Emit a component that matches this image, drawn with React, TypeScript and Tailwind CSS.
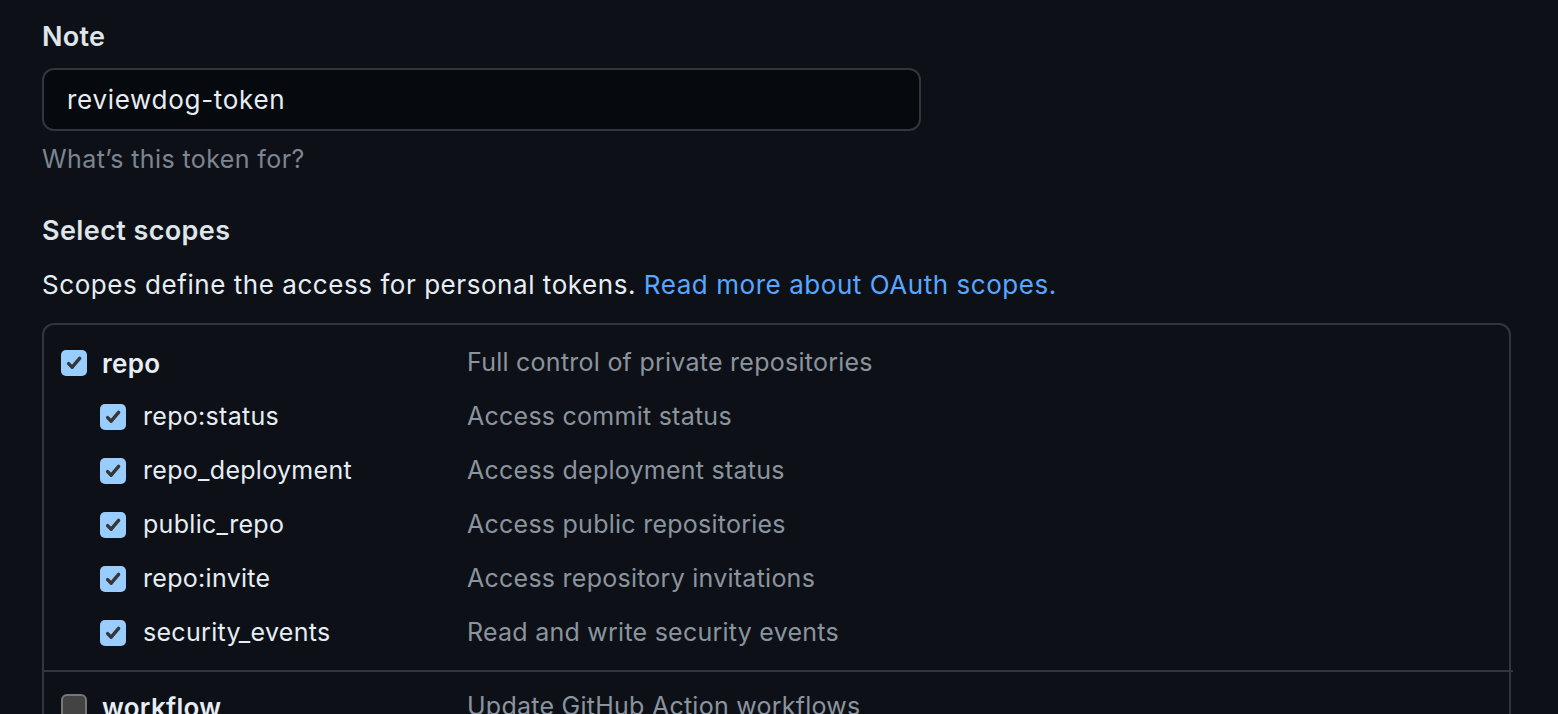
import React from 'react';

const font = { fontFamily: 'Inter, "Noto Sans", sans-serif' };

function Check({ checked }: { checked: boolean }) {
  if (!checked) {
    return <div className="w-[26px] h-[26px] rounded-[6px] bg-[#434343] border-2 border-[#777777] shrink-0" />;
  }
  return (
    <div className="w-[26px] h-[26px] rounded-[5px] bg-[#99ccff] flex items-center justify-center shrink-0">
      <svg width="18" height="18" viewBox="0 0 18 18" fill="none">
        <path d="M3.6 9.6 L7.2 13.2 L14.6 4.4" stroke="#363636" strokeWidth="3.4" strokeLinecap="round" strokeLinejoin="round" />
      </svg>
    </div>
  );
}

const subScopes = [
  { name: 'repo:status', desc: 'Access commit status' },
  { name: 'repo_deployment', desc: 'Access deployment status' },
  { name: 'public_repo', desc: 'Access public repositories' },
  { name: 'repo:invite', desc: 'Access repository invitations' },
  { name: 'security_events', desc: 'Read and write security events' },
];

export default function App() {
  return (
    <div className="w-full bg-[#0d1117] text-[#e6edf3] overflow-hidden h-[714px]" style={font}>
      <div className="pl-[42px] pr-[47px] pt-[19px]">
        <label className="block text-[27px] font-semibold leading-[36px] tracking-[0.3px] text-[#dfe5eb]">Note</label>
        <div className="mt-[13px] w-[879px] h-[63px] rounded-[12px] border-2 border-[#30363d] bg-[#06090e] flex items-center px-[23px]">
          <span className="text-[26px] tracking-[0.7px] text-[#e6edf3]">reviewdog-token</span>
        </div>
        <p className="mt-[11px] text-[25px] leading-[34px] tracking-[0.4px] text-[#7d8590]">What’s this token for?</p>

        <h3 className="mt-[37px] text-[27px] font-semibold leading-[36px] tracking-[0.4px] text-[#dfe5eb]">Select scopes</h3>
        <p className="mt-[18px] text-[26px] leading-[36px] tracking-[0.55px] text-[#e6edf3]">
          Scopes define the access for personal tokens.{' '}
          <span className="text-[#58a6ff]">Read more about OAuth scopes.</span>
        </p>

        <div className="mt-[20px] border-2 border-[#30363d] rounded-t-[12px] border-b-0">
          <div className="pt-[20px] pb-[19px]">
            <div className="flex items-center h-[36px] pl-[17px]">
              <Check checked />
              <span className="ml-[15px] w-[365px] text-[26px] font-semibold tracking-[0.3px] text-[#e6edf3]">repo</span>
              <span className="text-[25px] tracking-[0.25px] text-[#8b949e]">Full control of private repositories</span>
            </div>
            {subScopes.map((s) => (
              <div key={s.name} className="flex items-center h-[36px] mt-[18px] pl-[56px]">
                <Check checked />
                <span className="ml-[17px] w-[324px] text-[25px] tracking-[0.3px] text-[#e6edf3]">{s.name}</span>
                <span className="text-[25px] tracking-[0.25px] text-[#8b949e]">{s.desc}</span>
              </div>
            ))}
          </div>
          <div className="border-t-2 border-[#30363d] -mr-[4px] -ml-[2px] pl-[2px]">
            <div className="flex items-center h-[36px] mt-[17px] pl-[17px]">
              <Check checked={false} />
              <span className="ml-[15px] w-[365px] text-[26px] font-semibold tracking-[0.3px] text-[#e6edf3]">workflow</span>
              <span className="text-[25px] tracking-[0.25px] text-[#8b949e]">Update GitHub Action workflows</span>
            </div>
          </div>
        </div>
      </div>
    </div>
  );
}
